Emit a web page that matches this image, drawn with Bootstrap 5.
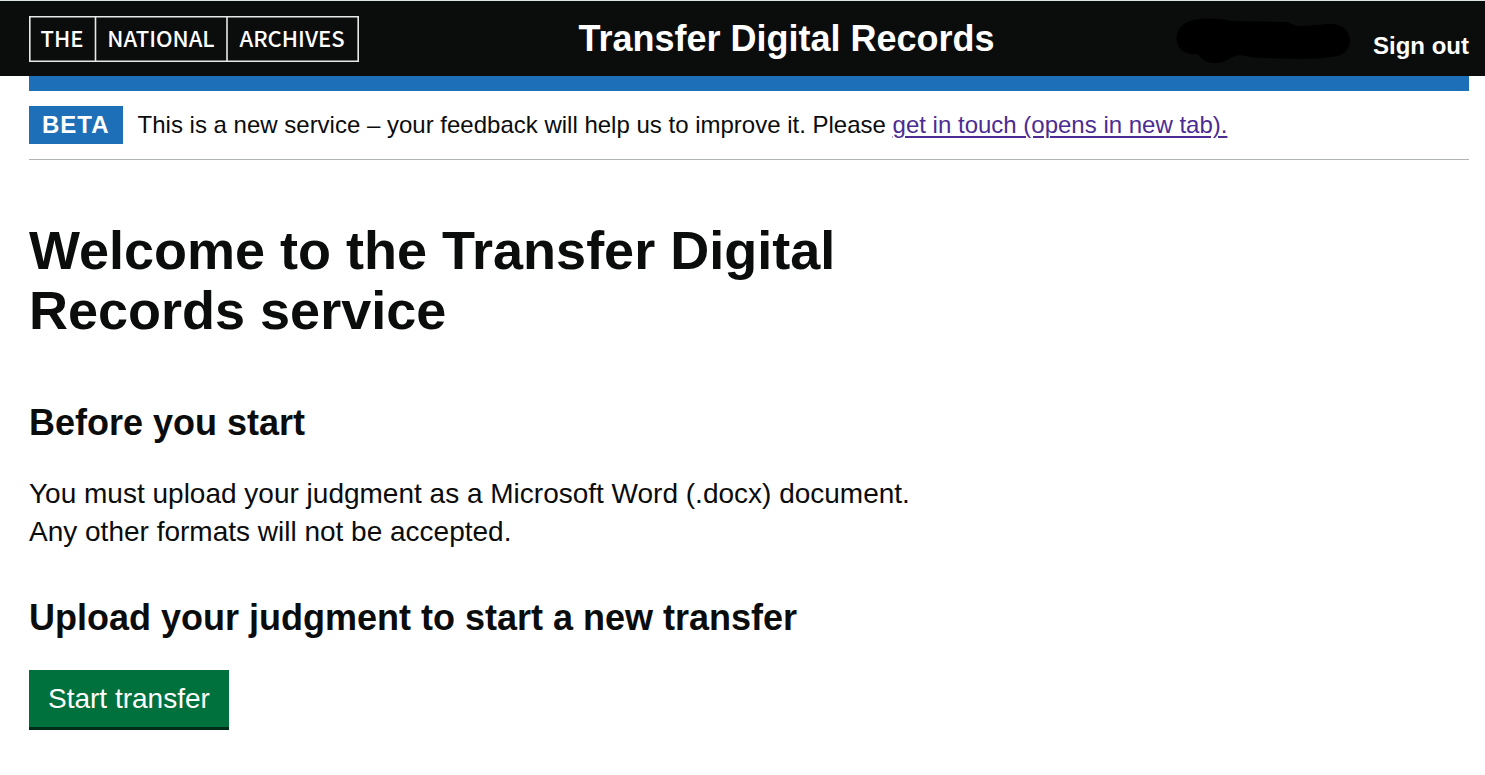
<!DOCTYPE html>
<html lang="en">
<head>
<meta charset="utf-8">
<meta name="viewport" content="width=device-width, initial-scale=1">
<title>Transfer Digital Records</title>
<link rel="stylesheet" href="https://cdn.jsdelivr.net/npm/bootstrap@5.3.0/dist/css/bootstrap.min.css">
<style>
  body { font-family: "Liberation Sans", Arial, sans-serif; font-size: 24px; line-height: 30px; color: #0b0c0c; }
  .page-width { padding-left: 29px; padding-right: 16px; }
  .site-header { background: #0b0c0c; border-top: 1px solid #dee5e0; min-height: 76px; }
  .site-title { font-size: 36px; line-height: 40px; padding-left: 38px; }
  .account { gap: 22px; }
  .sign-out { padding-top: 15px; }
  .brand-text { font-family: "Noto Sans CJK SC", Roboto, sans-serif; font-weight: 500; font-size: 22px; }
  .blue-bar { height: 15px; background: #1d70b8; }
  .phase-banner { padding: 15px 0; border-bottom: 1px solid #b1b4b6; gap: 15px; }
  .phase-tag { background: #1d70b8; letter-spacing: 1px; padding: 4px 13px; }
  .touch-link { color: #4c2c92; text-underline-offset: 3px; text-decoration-thickness: 2px; }
  h1 { font-size: 54px; line-height: 60px; margin-bottom: 60px; }
  h2 { font-size: 36px; line-height: 45px; margin-bottom: 30px; }
  main { padding-top: 60px; }
  .body-text { font-size: 28px; line-height: 38px; margin-bottom: 44px; }
  .btn-start { font-size: 28px; line-height: 33px; padding: 12px 19px; color: #fff; background: #00703c; border-bottom: 3px solid #002d18; }
  .btn-start:hover { background: #005a30; color: #fff; }
</style>
</head>
<body>
<header class="site-header page-width d-flex align-items-center justify-content-between">
  <a href="#" class="d-block" aria-label="The National Archives">
    <svg class="d-block" width="330" height="46" viewBox="0 0 330 46" fill="#fff">
      <path fill="none" stroke="#e6e9e8" stroke-width="1.6" d="M.8.8h328.4v44.4H.8zM66.5 1v44M198 1v44"/>
      <g class="brand-text" text-anchor="middle">
        <text x="33" y="31">THE</text>
        <text x="132" y="31">NATIONAL</text>
        <text x="263" y="31">ARCHIVES</text>
      </g>
    </svg>
  </a>
  <div class="site-title fw-bold text-white">Transfer Digital Records</div>
  <div class="account d-flex align-items-center">
    <svg width="175" height="50" viewBox="0 -2 175 50" aria-hidden="true">
      <path transform="translate(0 2)" d="M18 2C35-1 48 1 55 3L110 4C116 5 118 8 124 8C140 8 142 6 157 6C180 8 180 38 155 39C140 42 95 41 75 39C60 36 62 37 51 42C40 48 27 45 22 36C-6 39-6 6 18 2z"/>
    </svg>
    <a href="#" class="sign-out fw-bold text-white text-decoration-none">Sign out</a>
  </div>
</header>
<div class="page-width">
  <div class="blue-bar"></div>
  <div class="phase-banner d-flex align-items-center">
    <strong class="phase-tag text-white">BETA</strong>
    <span>This is a new service – your feedback will help us to improve it. Please <a class="touch-link" href="#">get in touch (opens in new tab).</a></span>
  </div>
  <main>
    <div class="row">
      <div class="col-8">
        <h1 class="fw-bold">Welcome to the Transfer Digital Records service</h1>
        <h2 class="fw-bold">Before you start</h2>
        <p class="body-text">You must upload your judgment as a Microsoft Word (.docx) document.<br>Any other formats will not be accepted.</p>
        <h2 class="fw-bold">Upload your judgment to start a new transfer</h2>
        <button type="button" class="btn btn-start rounded-0 border-top-0 border-start-0 border-end-0">Start transfer</button>
      </div>
    </div>
  </main>
</div>
<script src="https://cdn.jsdelivr.net/npm/bootstrap@5.3.0/dist/js/bootstrap.bundle.min.js"></script>
</body>
</html>
